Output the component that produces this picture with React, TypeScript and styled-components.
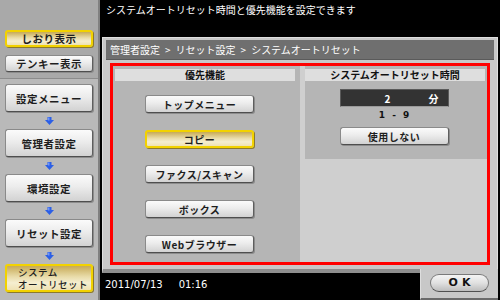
import React from 'react';
import styled, { createGlobalStyle, css } from 'styled-components';

const GlobalStyle = createGlobalStyle`
  html, body {
    margin: 0;
    padding: 0;
    width: 500px;
    height: 300px;
    overflow: hidden;
    background: #000;
    font-family: "Noto Sans CJK JP", "Noto Sans", sans-serif;
  }
`;

const Screen = styled.div`
  display: grid;
  grid-template-columns: 100px 1fr;
  width: 500px;
  height: 300px;
`;

const Sidebar = styled.div`
  display: flex;
  flex-direction: column;
  background: #b9b9b9;
  border-right: 2px solid #808080;
  box-sizing: border-box;
`;

const SidebarTop = styled.div`
  display: flex;
  flex-direction: column;
  gap: 8px;
  height: 79px;
  padding: 30px 5px 0;
  box-sizing: border-box;
  background: #a9a9a9;
  border-bottom: 1px solid #8c8c8c;
`;

const NavList = styled.div`
  display: flex;
  flex-direction: column;
  align-items: center;
  padding: 5px 5px 0;
`;

const raised = css`
  border: 1px solid #8a8a8a;
  border-right-color: #5e5e5e;
  border-bottom-color: #4e4e4e;
  border-radius: 3px;
  background: linear-gradient(#fbfbfb, #ececec 45%, #d2d2d2);
  box-shadow: 1px 1px 0 #8c8c8c;
`;

const selected = css`
  border: 2px solid #f2d200;
  border-radius: 3px;
  background: linear-gradient(#c7aa56, #e9dcaa 45%, #f5eed0 70%, #efe2b2);
  box-shadow: 1px 1px 0 #8c7a2c;
`;

const SideButton = styled.div<{ $on?: boolean; $tall?: boolean }>`
  display: flex;
  align-items: center;
  justify-content: center;
  box-sizing: border-box;
  width: 88px;
  height: ${(p) => (p.$tall ? '28px' : '17px')};
  font-size: 10.5px;
  font-weight: 700;
  color: #1e1e1e;
  letter-spacing: 0.5px;
  ${(p) => (p.$on ? selected : raised)}
`;

const TwoLineLabel = styled(SideButton)`
  flex-direction: column;
  align-items: flex-start;
  justify-content: center;
  padding-left: 11px;
  font-size: 9.5px;
  letter-spacing: 0.5px;
  font-weight: 500;
`;

const LabelLine = styled.span`
  display: block;
  height: 12px;
  line-height: 12px;
`;

const ArrowSlot = styled.div`
  display: flex;
  align-items: center;
  justify-content: center;
  height: 17px;
`;

const Main = styled.div`
  display: flex;
  flex-direction: column;
  background: #000;
`;

const Header = styled.div`
  height: 37px;
  padding: 3px 0 0 6px;
  box-sizing: border-box;
  color: #fff;
  font-size: 10px;
  line-height: 14px;
`;

const Panel = styled.div`
  display: flex;
  flex-direction: column;
  margin-left: 2px;
  width: 396px;
  height: 236px;
  box-sizing: border-box;
  background: #c8c8c8;
  border: 1px solid #dedede;
  border-bottom: 4px solid #8e8e8e;
  padding: 2px 3px 0;
`;

const Breadcrumb = styled.div`
  height: 20px;
  background: #6f6f6f;
  color: #fff;
  font-size: 10px;
  line-height: 20px;
  padding-left: 4px;
  border-bottom: 1px solid #5a5a5a;
  box-sizing: border-box;
`;

const Sep = styled.span`
  margin: 0 5px;
`;

const Highlight = styled.div`
  display: grid;
  grid-template-columns: 187px 1fr;
  column-gap: 5px;
  margin: 3px 4px 0;
  height: 202px;
  box-sizing: border-box;
  border: 3px solid #ff0000;
  background: #cfcfcf;
`;

const Column = styled.div<{ $short?: boolean }>`
  display: flex;
  flex-direction: column;
  background: #b5b5b5;
  height: ${(p) => (p.$short ? '93px' : 'auto')};
`;

const ColumnTitle = styled.div<{ $right?: boolean }>`
  margin: 3px ${(p) => (p.$right ? '2px 0 0' : '5px 0 2px')};
  height: 12px;
  background: #dedede;
  font-size: 10px;
  font-weight: 700;
  line-height: 12px;
  text-align: center;
  color: #111;
`;

const ChoiceList = styled.div`
  display: flex;
  flex-direction: column;
  gap: 17px;
  padding: 14px 0 0 32px;
`;

const ChoiceButton = styled.div<{ $on?: boolean }>`
  display: flex;
  align-items: center;
  justify-content: center;
  box-sizing: border-box;
  width: 109px;
  height: 18px;
  font-size: 10px;
  font-weight: 700;
  color: #1e1e1e;
  letter-spacing: 0.5px;
  ${(p) => (p.$on ? selected : raised)}
`;

const TimeBlock = styled.div`
  display: flex;
  flex-direction: column;
  align-items: center;
  padding: 8px 4px 0 0;
`;

const Readout = styled.div`
  display: flex;
  align-items: center;
  justify-content: space-between;
  box-sizing: border-box;
  width: 109px;
  height: 18px;
  padding: 0 9px 0 44px;
  background: #333;
  border: 1px solid #5a5a5a;
  border-bottom-color: #9a9a9a;
  color: #fff;
  font-size: 10px;
  font-weight: 700;
`;

const Range = styled.div`
  height: 20px;
  font-family: "DejaVu Sans", sans-serif;
  font-size: 9px;
  font-weight: 700;
  line-height: 17px;
  word-spacing: 4px;
  color: #111;
`;

const Footer = styled.div`
  display: flex;
  height: 27px;
`;

const StatusBar = styled.div`
  flex: 1;
  display: flex;
  align-items: center;
  gap: 16px;
  padding: 0 0 4px 5px;
  color: #fff;
  font-family: "DejaVu Sans", sans-serif;
  font-size: 10px;
`;

const OkArea = styled.div`
  display: flex;
  align-items: flex-start;
  justify-content: center;
  width: 78px;
  margin-right: 2px;
  margin-top: -4px;
  padding-top: 5px;
  box-sizing: border-box;
  background: #c8c8c8;
  border-left: 1px solid #dedede;
  border-bottom: 2px solid #6a6a6a;
`;

const OkButton = styled.div`
  width: 59px;
  height: 18px;
  border-radius: 9px;
  border: 1px solid #7a7a7a;
  border-bottom-color: #505050;
  background: linear-gradient(#f4f4f4, #e0e0e0 50%, #bdbdbd);
  box-sizing: border-box;
  font-family: "DejaVu Sans", sans-serif;
  font-size: 11px;
  font-weight: 700;
  letter-spacing: 4px;
  text-align: center;
  line-height: 16px;
  padding-left: 4px;
  color: #111;
`;

const DownArrow = () => (
  <svg width="9" height="8" viewBox="0 0 9 8">
    <rect x="2.5" y="0" width="4" height="3.5" fill="#2b5fe6" />
    <polygon points="0,3 9,3 4.5,8" fill="#2b5fe6" />
    <rect x="3" y="0.5" width="1.5" height="3" fill="#6f95ff" />
  </svg>
);

const navItems = ['設定メニュー', '管理者設定', '環境設定', 'リセット設定'];
const choices = ['トップメニュー', 'コピー', 'ファクス/スキャン', 'ボックス', 'Webブラウザー'];

export default function App() {
  return (
    <>
      <GlobalStyle />
      <Screen>
        <Sidebar>
          <SidebarTop>
            <SideButton $on>しおり表示</SideButton>
            <SideButton>テンキー表示</SideButton>
          </SidebarTop>
          <NavList>
            {navItems.map((item) => (
              <React.Fragment key={item}>
                <SideButton $tall>{item}</SideButton>
                <ArrowSlot>
                  <DownArrow />
                </ArrowSlot>
              </React.Fragment>
            ))}
            <TwoLineLabel $tall $on>
              <LabelLine>システム</LabelLine>
              <LabelLine>オートリセット</LabelLine>
            </TwoLineLabel>
          </NavList>
        </Sidebar>
        <Main>
          <Header>システムオートリセット時間と優先機能を設定できます</Header>
          <Panel>
            <Breadcrumb>
              管理者設定<Sep>&gt;</Sep>リセット設定<Sep>&gt;</Sep>システムオートリセット
            </Breadcrumb>
            <Highlight>
              <Column>
                <ColumnTitle>優先機能</ColumnTitle>
                <ChoiceList>
                  {choices.map((c) => (
                    <ChoiceButton key={c} $on={c === 'コピー'}>
                      {c}
                    </ChoiceButton>
                  ))}
                </ChoiceList>
              </Column>
              <Column $short>
                <ColumnTitle $right>システムオートリセット時間</ColumnTitle>
                <TimeBlock>
                  <Readout>
                    <span>2</span>
                    <span>分</span>
                  </Readout>
                  <Range>1 - 9</Range>
                  <ChoiceButton>使用しない</ChoiceButton>
                </TimeBlock>
              </Column>
            </Highlight>
          </Panel>
          <Footer>
            <StatusBar>
              <span>2011/07/13</span>
              <span>01:16</span>
            </StatusBar>
            <OkArea>
              <OkButton>OK</OkButton>
            </OkArea>
          </Footer>
        </Main>
      </Screen>
    </>
  );
}
